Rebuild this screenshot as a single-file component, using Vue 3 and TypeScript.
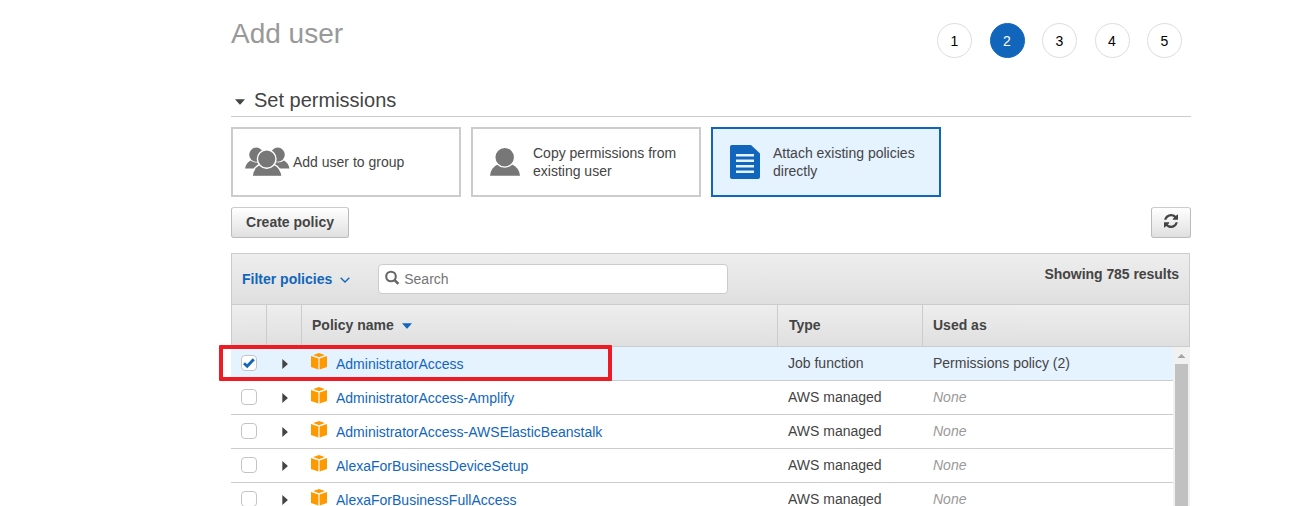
<script setup lang="ts">
import { ref } from 'vue'

interface Policy {
  name: string
  type: string
  usedAs: string | null
}

const steps: number[] = [1, 2, 3, 4, 5]
const activeStep = ref<number>(2)
const selected = ref<string>('AdministratorAccess')

const policies: Policy[] = [
  { name: 'AdministratorAccess', type: 'Job function', usedAs: 'Permissions policy (2)' },
  { name: 'AdministratorAccess-Amplify', type: 'AWS managed', usedAs: null },
  { name: 'AdministratorAccess-AWSElasticBeanstalk', type: 'AWS managed', usedAs: null },
  { name: 'AlexaForBusinessDeviceSetup', type: 'AWS managed', usedAs: null },
  { name: 'AlexaForBusinessFullAccess', type: 'AWS managed', usedAs: null },
]
</script>

<template>
  <div class="page">
    <main class="content">
      <header class="top">
        <h1>Add user</h1>
        <ol class="steps">
          <li v-for="s in steps" :key="s" :class="{ active: s === activeStep }">{{ s }}</li>
        </ol>
      </header>

      <h2 class="section">
        <svg class="caret" width="10" height="6" viewBox="0 0 10 6"><path d="M0 0.3H10L5.6 5.2Q5 5.8 4.4 5.2Z" fill="#444" /></svg>
        <span>Set permissions</span>
      </h2>

      <div class="cards">
        <div class="card group">
          <svg width="46" height="30" viewBox="0 0 46 30" fill="#777">
            <circle cx="11.300" cy="7.700" r="7.100" />
            <path d="M0 21.500Q1 16 5.500 13.400Q11 17.500 17 13.400L20 21.500Z" />
            <circle cx="32.700" cy="7.700" r="7.100" />
            <path d="M44.500 21.500Q43.500 16 39 13.400Q33.500 17.500 27 13.400L24 21.500Z" />
            <g stroke="#fff" stroke-width="1.400">
              <path d="M7 29.600Q8 20.500 14.500 17.300Q21.700 24 29 17.300Q36 20.500 37.200 29.600Z" />
              <circle cx="21.700" cy="12" r="9.300" />
            </g>
            <rect x="6" y="28.800" width="32" height="1.200" fill="#fff" />
          </svg>
          <span>Add user to group</span>
        </div>
        <div class="card">
          <svg width="30" height="34" viewBox="0 0 30 34" fill="#777">
            <path d="M0 30.800Q0.700 22.500 8 19.200Q14.700 24.500 21.700 19.200Q29.300 22.500 30 30.800Z" />
            <circle cx="14.700" cy="12.200" r="9.900" stroke="#fff" stroke-width="1.300" />
          </svg>
          <span>Copy permissions from existing user</span>
        </div>
        <div class="card chosen">
          <svg width="30" height="34" viewBox="0 0 30 34">
            <path d="M2 0H21L30 8.500V32Q30 34 28 34H2Q0 34 0 32V2Q0 0 2 0Z" fill="#1166bb" />
            <path d="M6 10.200H24M6 15.700H24M6 21.200H24M6 26.700H24" stroke="#e5f2ff" stroke-width="2.600" />
          </svg>
          <span>Attach existing policies directly</span>
        </div>
      </div>

      <div class="actions">
        <button type="button" class="btn create">Create policy</button>
        <button type="button" class="btn refresh" aria-label="Refresh">
          <svg width="14" height="14" viewBox="0 0 1536 1536" fill="#444">
            <path d="M1511 928q0 5-1 7-64 268-268 434.500T764 1536q-146 0-282.500-55T238 1324l-129 129q-19 19-45 19t-45-19-19-45V960q0-26 19-45t45-19h448q26 0 45 19t19 45-19 45l-137 137q71 66 161 102t187 36q134 0 250-65t186-179q11-17 53-117 8-23 30-23h192q13 0 22.500 9.500t9.500 22.500zm25-800v448q0 26-19 45t-45 19h-448q-26 0-45-19t-19-45 19-45l138-138Q969 256 768 256q-134 0-250 65T332 500q-11 17-53 117-8 23-30 23H50q-13 0-22.500-9.500T18 608v-7q65-268 270-434.500T768 0q146 0 284 55.500T1297 212l130-129q19-19 45-19t45 19 19 45z" />
          </svg>
        </button>
      </div>

      <section class="table">
        <div class="filter">
          <span class="filter-link">Filter policies</span>
          <svg class="chevron" width="10" height="6" viewBox="0 0 10 6"><path d="M0.700 0.700L5 5L9.300 0.700" fill="none" stroke="#1166bb" stroke-width="1.300" /></svg>
          <div class="search">
            <svg width="16" height="16" viewBox="0 0 16 16" fill="none" stroke="#666">
              <circle cx="6" cy="6.500" r="4.800" stroke-width="2.100" />
              <path d="M9.600 10.100L13.400 13.900" stroke-width="2.600" />
            </svg>
            <span>Search</span>
          </div>
          <span class="count">Showing 785 results</span>
        </div>

        <div class="grid head">
          <div></div>
          <div></div>
          <div class="name-head">
            Policy name
            <svg width="10" height="6" viewBox="0 0 10 6"><path d="M0 0.300H10L5.600 5.200Q5 5.800 4.400 5.200Z" fill="#1166bb" /></svg>
          </div>
          <div>Type</div>
          <div>Used as</div>
        </div>

        <div class="body">
          <div class="rows">
            <div v-for="p in policies" :key="p.name" class="grid row" :class="{ selected: p.name === selected }">
              <div class="check-cell">
                <span class="check">
                  <svg v-if="p.name === selected" width="14" height="14" viewBox="0 0 14 14"><path d="M2 7.200L5.200 10.200L11.800 3.200" fill="none" stroke="#1166bb" stroke-width="2.900" /></svg>
                </span>
              </div>
              <div class="expand-cell">
                <svg width="6" height="10" viewBox="0 0 6 10"><path d="M0.300 0L5.400 4.500Q5.800 5 5.400 5.500L0.300 10Z" fill="#444" /></svg>
              </div>
              <div class="name-cell">
                <svg width="16" height="17" viewBox="0 0 16 17" fill="#ff9900">
                  <path d="M2.200 1.900L8 0L13.800 1.900L8 4.200Z" />
                  <path d="M0 2.900L7.400 5.400V16.500L0 13.900Z" />
                  <path d="M16 2.900L8.600 5.400V16.500L16 13.900Z" />
                </svg>
                <a>{{ p.name }}</a>
              </div>
              <div class="type-cell">{{ p.type }}</div>
              <div class="used-cell" :class="{ none: !p.usedAs }">{{ p.usedAs ?? 'None' }}</div>
            </div>
            <div class="highlight"></div>
          </div>
          <div class="scrollbar">
            <svg width="17" height="17" viewBox="0 0 17 17"><path d="M4.500 11L8.500 7L12.500 11Z" fill="#a3a3a3" /></svg>
            <div class="thumb"></div>
          </div>
        </div>
      </section>
    </main>
  </div>
</template>

<style>
body {
  margin: 0;
  background: #fff;
}
</style>

<style scoped>
.page {
  height: 506px;
  overflow: hidden;
  font: 14px/18px "Liberation Sans", Arial, sans-serif;
  color: #444;
}
.page * {
  box-sizing: border-box;
}
.page svg {
  display: block;
  flex: none;
}
.content {
  width: 960px;
  margin-left: 231px;
}
.top {
  display: flex;
  justify-content: space-between;
  height: 87px;
}
h1 {
  margin: 18px 0 0;
  font-size: 28px;
  line-height: 32px;
  font-weight: 400;
  color: #999;
}
.steps {
  display: flex;
  gap: 17.5px;
  margin: 23px 9px 0 0;
  padding: 0;
  list-style: none;
}
.steps li {
  width: 35px;
  height: 35px;
  border: 1px solid #ddd;
  border-radius: 50%;
  line-height: 34px;
  text-align: center;
  color: #000;
}
.steps li.active {
  background: #1166bb;
  border-color: #1166bb;
  color: #fff;
}
.section {
  display: flex;
  height: 30px;
  margin: 0;
  border-bottom: 1px solid #ccc;
  font-size: 20px;
  line-height: 26px;
  font-weight: 400;
}
.caret {
  margin: 12px 9px 0 4px;
}
.cards {
  display: flex;
  gap: 10px;
  margin-top: 10px;
}
.card {
  display: flex;
  align-items: center;
  width: 230px;
  height: 70px;
  padding-left: 17px;
  border: 2px solid #ccc;
  gap: 13px;
}
.card span {
  width: 155px;
}
.card.group {
  padding-left: 12px;
  gap: 2px;
}
.card.chosen {
  border-color: #1166bb;
  background: #e5f2ff;
}
.actions {
  display: flex;
  justify-content: space-between;
  margin-top: 10px;
}
.btn {
  display: flex;
  align-items: center;
  justify-content: center;
  height: 31px;
  padding: 0;
  border: 1px solid #bbb;
  border-top-color: #ccc;
  border-radius: 3px;
  background: linear-gradient(#fff, #e0e0e0);
  font: bold 14px/18px "Liberation Sans", Arial, sans-serif;
  color: #444;
}
.create {
  width: 118px;
  padding-bottom: 2px;
}
.refresh {
  width: 40px;
  padding-bottom: 3px;
}
.table {
  width: 959px;
  margin-top: 15px;
}
.filter {
  display: flex;
  height: 52px;
  padding: 10px 10px 0;
  border: 1px solid #ccc;
  background: linear-gradient(#eee, #dfdfdf);
  font-weight: bold;
}
.filter-link {
  margin-top: 6px;
  color: #1166bb;
}
.chevron {
  margin: 13px 0 0 8px;
}
.search {
  display: flex;
  width: 350px;
  height: 30px;
  margin-left: 28px;
  padding: 5px 6px;
  border: 1px solid #ccc;
  border-radius: 4px;
  background: #fff;
  font-weight: 400;
  color: #757575;
}
.search span {
  margin-left: 3px;
}
.count {
  margin: 1px 0 0 auto;
  letter-spacing: -0.05px;
}
.grid {
  display: grid;
  grid-template-columns: 35px 35px 476px 145px 1fr;
}
.head {
  height: 42px;
  border: 1px solid #ccc;
  border-top: 0;
  background: linear-gradient(#eee, #dfdfdf);
  font-weight: bold;
}
.head > div {
  padding: 11px 0 0 10px;
  border-right: 1px solid #ccc;
}
.head > div:last-child {
  border-right: 0;
}
.head > div:nth-child(4) {
  padding-left: 11px;
}
.name-head {
  display: flex;
}
.name-head svg {
  margin: 7px 0 0 8px;
}
.body {
  display: flex;
  height: 170px;
}
.rows {
  position: relative;
  width: 942px;
}
.row {
  height: 34px;
  border-bottom: 1px solid #ccc;
}
.row.selected {
  background: #e5f2ff;
}
.check {
  display: block;
  width: 16px;
  height: 16px;
  margin: 8px 0 0 10px;
  border: 1px solid #c4c4c4;
  border-radius: 4px;
  background: #fff;
}
.expand-cell {
  padding: 12px 0 0 16px;
}
.name-cell {
  display: flex;
  padding: 6px 0 0 10px;
}
.name-cell a {
  margin: 2px 0 0 9px;
  color: #1166bb;
}
.type-cell {
  padding: 7px 0 0 11px;
}
.used-cell {
  padding: 7px 0 0 11px;
}
.used-cell.none {
  color: #999;
  font-style: italic;
}
.highlight {
  position: absolute;
  left: -12px;
  top: -2px;
  width: 393px;
  height: 36px;
  border: 4px solid #ed1c24;
  border-radius: 1px;
}
.scrollbar {
  width: 17px;
  background: #f1f1f1;
}
.thumb {
  width: 13px;
  height: 153px;
  margin-left: 2px;
  background: #c1c1c1;
}
</style>
